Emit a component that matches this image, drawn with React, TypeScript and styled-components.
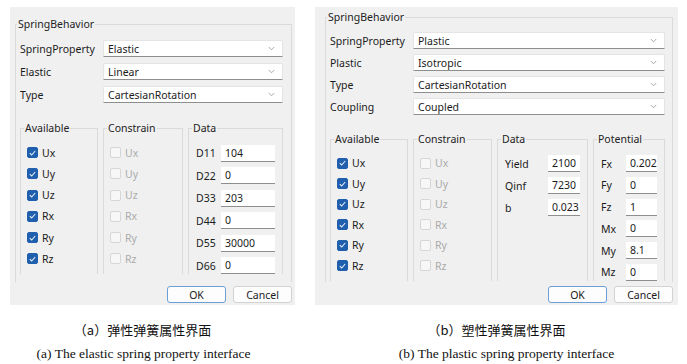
import styled, { createGlobalStyle } from "styled-components"

const GlobalStyle = createGlobalStyle`
  body {
    margin: 0;
    background: #ffffff;
    font-family: "Noto Sans", "Noto Sans CJK SC", sans-serif;
    color: #1b1b1b;
  }
`

const Page = styled.div`
  display: flex;
  gap: 20px;
  padding: 7px 0 0 10px;
`

const Column = styled.div<{ $w: number }>`
  width: ${(p) => p.$w}px;
  display: flex;
  flex-direction: column;
`

const Panel = styled.div<{ $pad: string }>`
  height: 298px;
  box-sizing: border-box;
  padding: ${(p) => p.$pad};
  background: #f0f0f0;
  display: flex;
  flex-direction: column;
`

const Frame = styled.fieldset<{ $pad: string }>`
  flex: 1;
  min-width: 0;
  margin: 0;
  padding: ${(p) => p.$pad};
  border: 1px solid #dadada;
  border-bottom: none;
  display: flex;
  flex-direction: column;
`

const Legend = styled.legend`
  margin-left: -3px;
  padding: 0 1px;
  font-size: 10.5px;
  line-height: 15px;
  color: #222;
`

const ComboList = styled.div<{ $gap: number }>`
  display: flex;
  flex-direction: column;
  gap: ${(p) => p.$gap}px;
`

const ComboRow = styled.div`
  display: grid;
  grid-template-columns: 83px 1fr;
  align-items: center;
  height: 17px;
  font-size: 10.5px;
`

const Combo = styled.div`
  height: 17px;
  box-sizing: border-box;
  display: flex;
  align-items: center;
  justify-content: space-between;
  padding: 0 7px 0 4px;
  background: #ffffff;
  border: 1px solid #e4e4e4;
  border-bottom-color: #8e8e8e;
  border-radius: 2px 2px 0 0;
`

const Groups = styled.div<{ $top: number; $cols: string }>`
  flex: 1;
  margin-top: ${(p) => p.$top}px;
  display: grid;
  grid-template-columns: ${(p) => p.$cols};
  column-gap: 5px;
`

const Group = styled.fieldset`
  min-width: 0;
  margin: 0;
  padding: 0 7px 0 6px;
  border: 1px solid #dadada;
  border-bottom: none;
`

const CheckList = styled.div<{ $gap: number }>`
  display: flex;
  flex-direction: column;
  gap: ${(p) => p.$gap}px;
  margin-top: 8px;
`

const CheckRow = styled.div<{ $off?: boolean }>`
  display: flex;
  align-items: center;
  gap: 4px;
  height: 17px;
  font-size: 10.5px;
  color: ${(p) => (p.$off ? "#ababab" : "#1b1b1b")};
`

const Box = styled.span<{ $on: boolean }>`
  width: 11px;
  height: 11px;
  box-sizing: border-box;
  border-radius: 2px;
  display: flex;
  align-items: center;
  justify-content: center;
  background: ${(p) => (p.$on ? "#1f5fae" : "#f7f7f7")};
  border: 1px solid ${(p) => (p.$on ? "#1f5fae" : "#d6d6d6")};
`

const DataList = styled.div<{ $gap: number }>`
  display: flex;
  flex-direction: column;
  gap: ${(p) => p.$gap}px;
  margin-top: 8.5px;
`

const DataRow = styled.div<{ $labelW: number; $inputW: number }>`
  display: grid;
  grid-template-columns: ${(p) => p.$labelW}px ${(p) => p.$inputW}px;
  align-items: center;
  height: 17px;
  font-size: 10.5px;
  padding-left: 1px;
`

const Input = styled.div`
  height: 17px;
  box-sizing: border-box;
  display: flex;
  align-items: center;
  padding-left: 4px;
  background: #ffffff;
  border-bottom: 1px solid #8e8e8e;
`

const Buttons = styled.div`
  display: flex;
  justify-content: flex-end;
  gap: 7px;
  margin-top: 4px;
`

const Button = styled.div<{ $primary?: boolean }>`
  width: 59px;
  height: 17px;
  box-sizing: border-box;
  display: flex;
  align-items: center;
  justify-content: center;
  font-size: 10.5px;
  background: #fdfdfd;
  border: 1px solid ${(p) => (p.$primary ? "#6a9fd8" : "#d2d2d2")};
  border-radius: 3px;
`

const Captions = styled.div`
  display: flex;
  flex-direction: column;
  align-items: center;
  margin-top: 17px;
  white-space: nowrap;
`

const CaptionCn = styled.div<{ $shift: number }>`
  font-family: "Noto Sans CJK SC", serif;
  font-size: 13px;
  line-height: 16px;
  color: #111;
  transform: translateX(${(p) => p.$shift}px);
`

const CaptionEn = styled.div<{ $shift: number }>`
  margin-top: 8px;
  font-family: "Liberation Serif", serif;
  font-size: 13.5px;
  line-height: 15px;
  color: #111;
  transform: translateX(${(p) => p.$shift}px);
`

const Chevron = () => (
  <svg width="7" height="5" viewBox="0 0 7 5">
    <polyline points="0.8,1 3.5,3.8 6.2,1" fill="none" stroke="#a0a0a0" strokeWidth="0.9" />
  </svg>
)

const Check = () => (
  <svg width="7" height="6" viewBox="0 0 7 6">
    <polyline points="0.8,3.2 2.7,5 6.2,1" fill="none" stroke="#e8f0fa" strokeWidth="1.1" />
  </svg>
)

type Field = { label: string; value: string }

type DataSpec = {
  title: string
  labelW: number
  inputW: number
  gap: number
  rows: Field[]
}

type DialogSpec = {
  width: number
  pad: string
  framePad: string
  comboGap: number
  groupsTop: number
  groupCols: string
  checkGap: number
  combos: Field[]
  data: DataSpec[]
  captionCn: string
  captionEn: string
  shiftCn: number
  shiftEn: number
}

const axes = ["Ux", "Uy", "Uz", "Rx", "Ry", "Rz"]

const dialogs: DialogSpec[] = [
  {
    width: 285,
    pad: "10px 3px 2px 5px",
    framePad: "8px 8px 0 4px",
    comboGap: 6,
    groupsTop: 18,
    groupCols: "78px 80px 95px",
    checkGap: 4.3,
    combos: [
      { label: "SpringProperty", value: "Elastic" },
      { label: "Elastic", value: "Linear" },
      { label: "Type", value: "CartesianRotation" },
    ],
    data: [
      {
        title: "Data",
        labelW: 25,
        inputW: 54,
        gap: 5.6,
        rows: [
          { label: "D11", value: "104" },
          { label: "D22", value: "0" },
          { label: "D33", value: "203" },
          { label: "D44", value: "0" },
          { label: "D55", value: "30000" },
          { label: "D66", value: "0" },
        ],
      },
    ],
    captionCn: "（a）弹性弹簧属性界面",
    captionEn: "(a) The elastic spring property interface",
    shiftCn: -10,
    shiftEn: -9,
  },
  {
    width: 363,
    pad: "3px 5px 2px 10px",
    framePad: "7px 7px 0 4px",
    comboGap: 5,
    groupsTop: 16.5,
    groupCols: "78px 79px 91px 72px",
    checkGap: 3.6,
    combos: [
      { label: "SpringProperty", value: "Plastic" },
      { label: "Plastic", value: "Isotropic" },
      { label: "Type", value: "CartesianRotation" },
      { label: "Coupling", value: "Coupled" },
    ],
    data: [
      {
        title: "Data",
        labelW: 43,
        inputW: 32,
        gap: 5,
        rows: [
          { label: "Yield", value: "2100" },
          { label: "Qinf", value: "7230" },
          { label: "b", value: "0.023" },
        ],
      },
      {
        title: "Potential",
        labelW: 25,
        inputW: 31,
        gap: 4.8,
        rows: [
          { label: "Fx", value: "0.202" },
          { label: "Fy", value: "0" },
          { label: "Fz", value: "1" },
          { label: "Mx", value: "0" },
          { label: "My", value: "8.1" },
          { label: "Mz", value: "0" },
        ],
      },
    ],
    captionCn: "（b）塑性弹簧属性界面",
    captionEn: "(b) The plastic spring property interface",
    shiftCn: 0,
    shiftEn: 10,
  },
]

const Dialog = ({ spec }: { spec: DialogSpec }) => (
  <Column $w={spec.width}>
    <Panel $pad={spec.pad}>
      <Frame $pad={spec.framePad}>
        <Legend>SpringBehavior</Legend>
        <ComboList $gap={spec.comboGap}>
          {spec.combos.map((c) => (
            <ComboRow key={c.label}>
              <span>{c.label}</span>
              <Combo>
                <span>{c.value}</span>
                <Chevron />
              </Combo>
            </ComboRow>
          ))}
        </ComboList>
        <Groups $top={spec.groupsTop} $cols={spec.groupCols}>
          <Group>
            <Legend>Available</Legend>
            <CheckList $gap={spec.checkGap}>
              {axes.map((a) => (
                <CheckRow key={a}>
                  <Box $on>
                    <Check />
                  </Box>
                  {a}
                </CheckRow>
              ))}
            </CheckList>
          </Group>
          <Group>
            <Legend>Constrain</Legend>
            <CheckList $gap={spec.checkGap}>
              {axes.map((a) => (
                <CheckRow key={a} $off>
                  <Box $on={false} />
                  {a}
                </CheckRow>
              ))}
            </CheckList>
          </Group>
          {spec.data.map((d) => (
            <Group key={d.title}>
              <Legend>{d.title}</Legend>
              <DataList $gap={d.gap}>
                {d.rows.map((r) => (
                  <DataRow key={r.label} $labelW={d.labelW} $inputW={d.inputW}>
                    <span>{r.label}</span>
                    <Input>{r.value}</Input>
                  </DataRow>
                ))}
              </DataList>
            </Group>
          ))}
        </Groups>
      </Frame>
      <Buttons>
        <Button $primary>OK</Button>
        <Button>Cancel</Button>
      </Buttons>
    </Panel>
    <Captions>
      <CaptionCn $shift={spec.shiftCn}>{spec.captionCn}</CaptionCn>
      <CaptionEn $shift={spec.shiftEn}>{spec.captionEn}</CaptionEn>
    </Captions>
  </Column>
)

const App = () => (
  <>
    <GlobalStyle />
    <Page>
      {dialogs.map((d) => (
        <Dialog key={d.captionEn} spec={d} />
      ))}
    </Page>
  </>
)

export default App
